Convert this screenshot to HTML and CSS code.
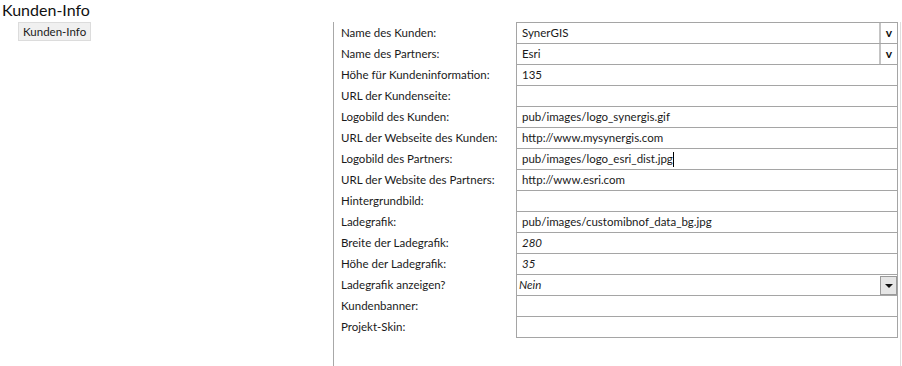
FILE: index.html
```html
<!DOCTYPE html>
<html lang="de">
<head>
    <meta charset="UTF-8">
    <meta name="viewport" content="width=device-width, initial-scale=1.0">
    <title>Kunden-Info</title>
    <link rel="stylesheet" href="styles.css">
</head>
<body>
    <h1>Kunden-Info</h1>
    <div class="container">
        <!-- Navigation links -->
        <div class="sidebar">
            <button class="tab">Kunden-Info</button>
        </div>

        <!-- Property grid -->
        <div class="panel">
            <div class="row">
                <div class="label">Name des Kunden:</div>
                <div class="field combo"><span class="value">SynerGIS</span><span class="drop">v</span></div>
            </div>
            <div class="row">
                <div class="label">Name des Partners:</div>
                <div class="field combo"><span class="value">Esri</span><span class="drop">v</span></div>
            </div>
            <div class="row">
                <div class="label">Höhe für Kundeninformation:</div>
                <div class="field"><span class="value">135</span></div>
            </div>
            <div class="row">
                <div class="label">URL der Kundenseite:</div>
                <div class="field"></div>
            </div>
            <div class="row">
                <div class="label">Logobild des Kunden:</div>
                <div class="field"><span class="value">pub/images/logo_synergis.gif</span></div>
            </div>
            <div class="row">
                <div class="label">URL der Webseite des Kunden:</div>
                <div class="field"><span class="value">http://www.mysynergis.com</span></div>
            </div>
            <div class="row">
                <div class="label">Logobild des Partners:</div>
                <div class="field"><span class="value">pub/images/logo_esri_dist.jpg</span><span class="caret"></span></div>
            </div>
            <div class="row">
                <div class="label">URL der Website des Partners:</div>
                <div class="field"><span class="value">http://www.esri.com</span></div>
            </div>
            <div class="row">
                <div class="label">Hintergrundbild:</div>
                <div class="field"></div>
            </div>
            <div class="row">
                <div class="label">Ladegrafik:</div>
                <div class="field"><span class="value">pub/images/customibnof_data_bg.jpg</span></div>
            </div>
            <div class="row">
                <div class="label">Breite der Ladegrafik:</div>
                <div class="field"><span class="value default">280</span></div>
            </div>
            <div class="row">
                <div class="label">Höhe der Ladegrafik:</div>
                <div class="field"><span class="value default">35</span></div>
            </div>
            <div class="row">
                <div class="label">Ladegrafik anzeigen?</div>
                <div class="field select"><span class="value default">Nein</span><span class="arrow"></span></div>
            </div>
            <div class="row">
                <div class="label">Kundenbanner:</div>
                <div class="field"></div>
            </div>
            <div class="row">
                <div class="label">Projekt-Skin:</div>
                <div class="field"></div>
            </div>
        </div>
    </div>
</body>
</html>
```

FILE: styles.css
```css
body {
    font-family: 'Lato', 'Noto Sans', sans-serif;
    font-size: 11.5px;
    color: #1a1a1a;
    background-color: white;
    margin: 0;
}

h1 {
    font-size: 16px;
    font-weight: normal;
    line-height: 20px;
    height: 20px;
    margin: 0;
    padding-left: 2px;
    color: #111;
}

.container {
    display: flex;
    margin-top: 2px;
    height: 344px;
}

.sidebar {
    width: 333px;
    flex-shrink: 0;
}

.tab {
    font-family: inherit;
    font-size: 11.5px;
    color: #1a1a1a;
    background-color: #f0f0f0;
    border: 1px solid #dcdcdc;
    margin-left: 18px;
    margin-top: 0;
    height: 19px;
    padding: 0 4px;
    line-height: 15px;
}

.panel {
    width: 557px;
    border-left: 1px solid #a8a8a8;
    border-right: 1px solid #dedede;
    padding-left: 7px;
    padding-right: 2px;
}

.row {
    display: flex;
    height: 22px;
    margin-top: -1px;
}

.row:first-child {
    margin-top: 0;
}

.label {
    width: 175px;
    flex-shrink: 0;
    line-height: 22px;
}

.field {
    flex: 1;
    display: flex;
    align-items: center;
    border: 1px solid #a5a5a5;
    background: white;
    box-sizing: border-box;
    height: 22px;
}

.value {
    padding-left: 5px;
    line-height: 20px;
    white-space: nowrap;
}

.default {
    font-style: italic;
}

.caret {
    width: 1px;
    height: 15px;
    background: black;
}

.combo .value {
    flex: 1;
}

.drop {
    width: 16px;
    height: 20px;
    border-left: 2px solid #c4c4c4;
    font-weight: bold;
    font-size: 12px;
    text-align: center;
    line-height: 19px;
    color: #111;
}

.select .value {
    flex: 1;
    padding-left: 2px;
}

.arrow {
    width: 15px;
    height: 17px;
    background: #e6e6e6;
    border: 1px solid #9a9a9a;
    position: relative;
}

.arrow::after {
    content: "";
    position: absolute;
    left: 4px;
    top: 7px;
    border-left: 4px solid transparent;
    border-right: 4px solid transparent;
    border-top: 4px solid #111;
}
```
